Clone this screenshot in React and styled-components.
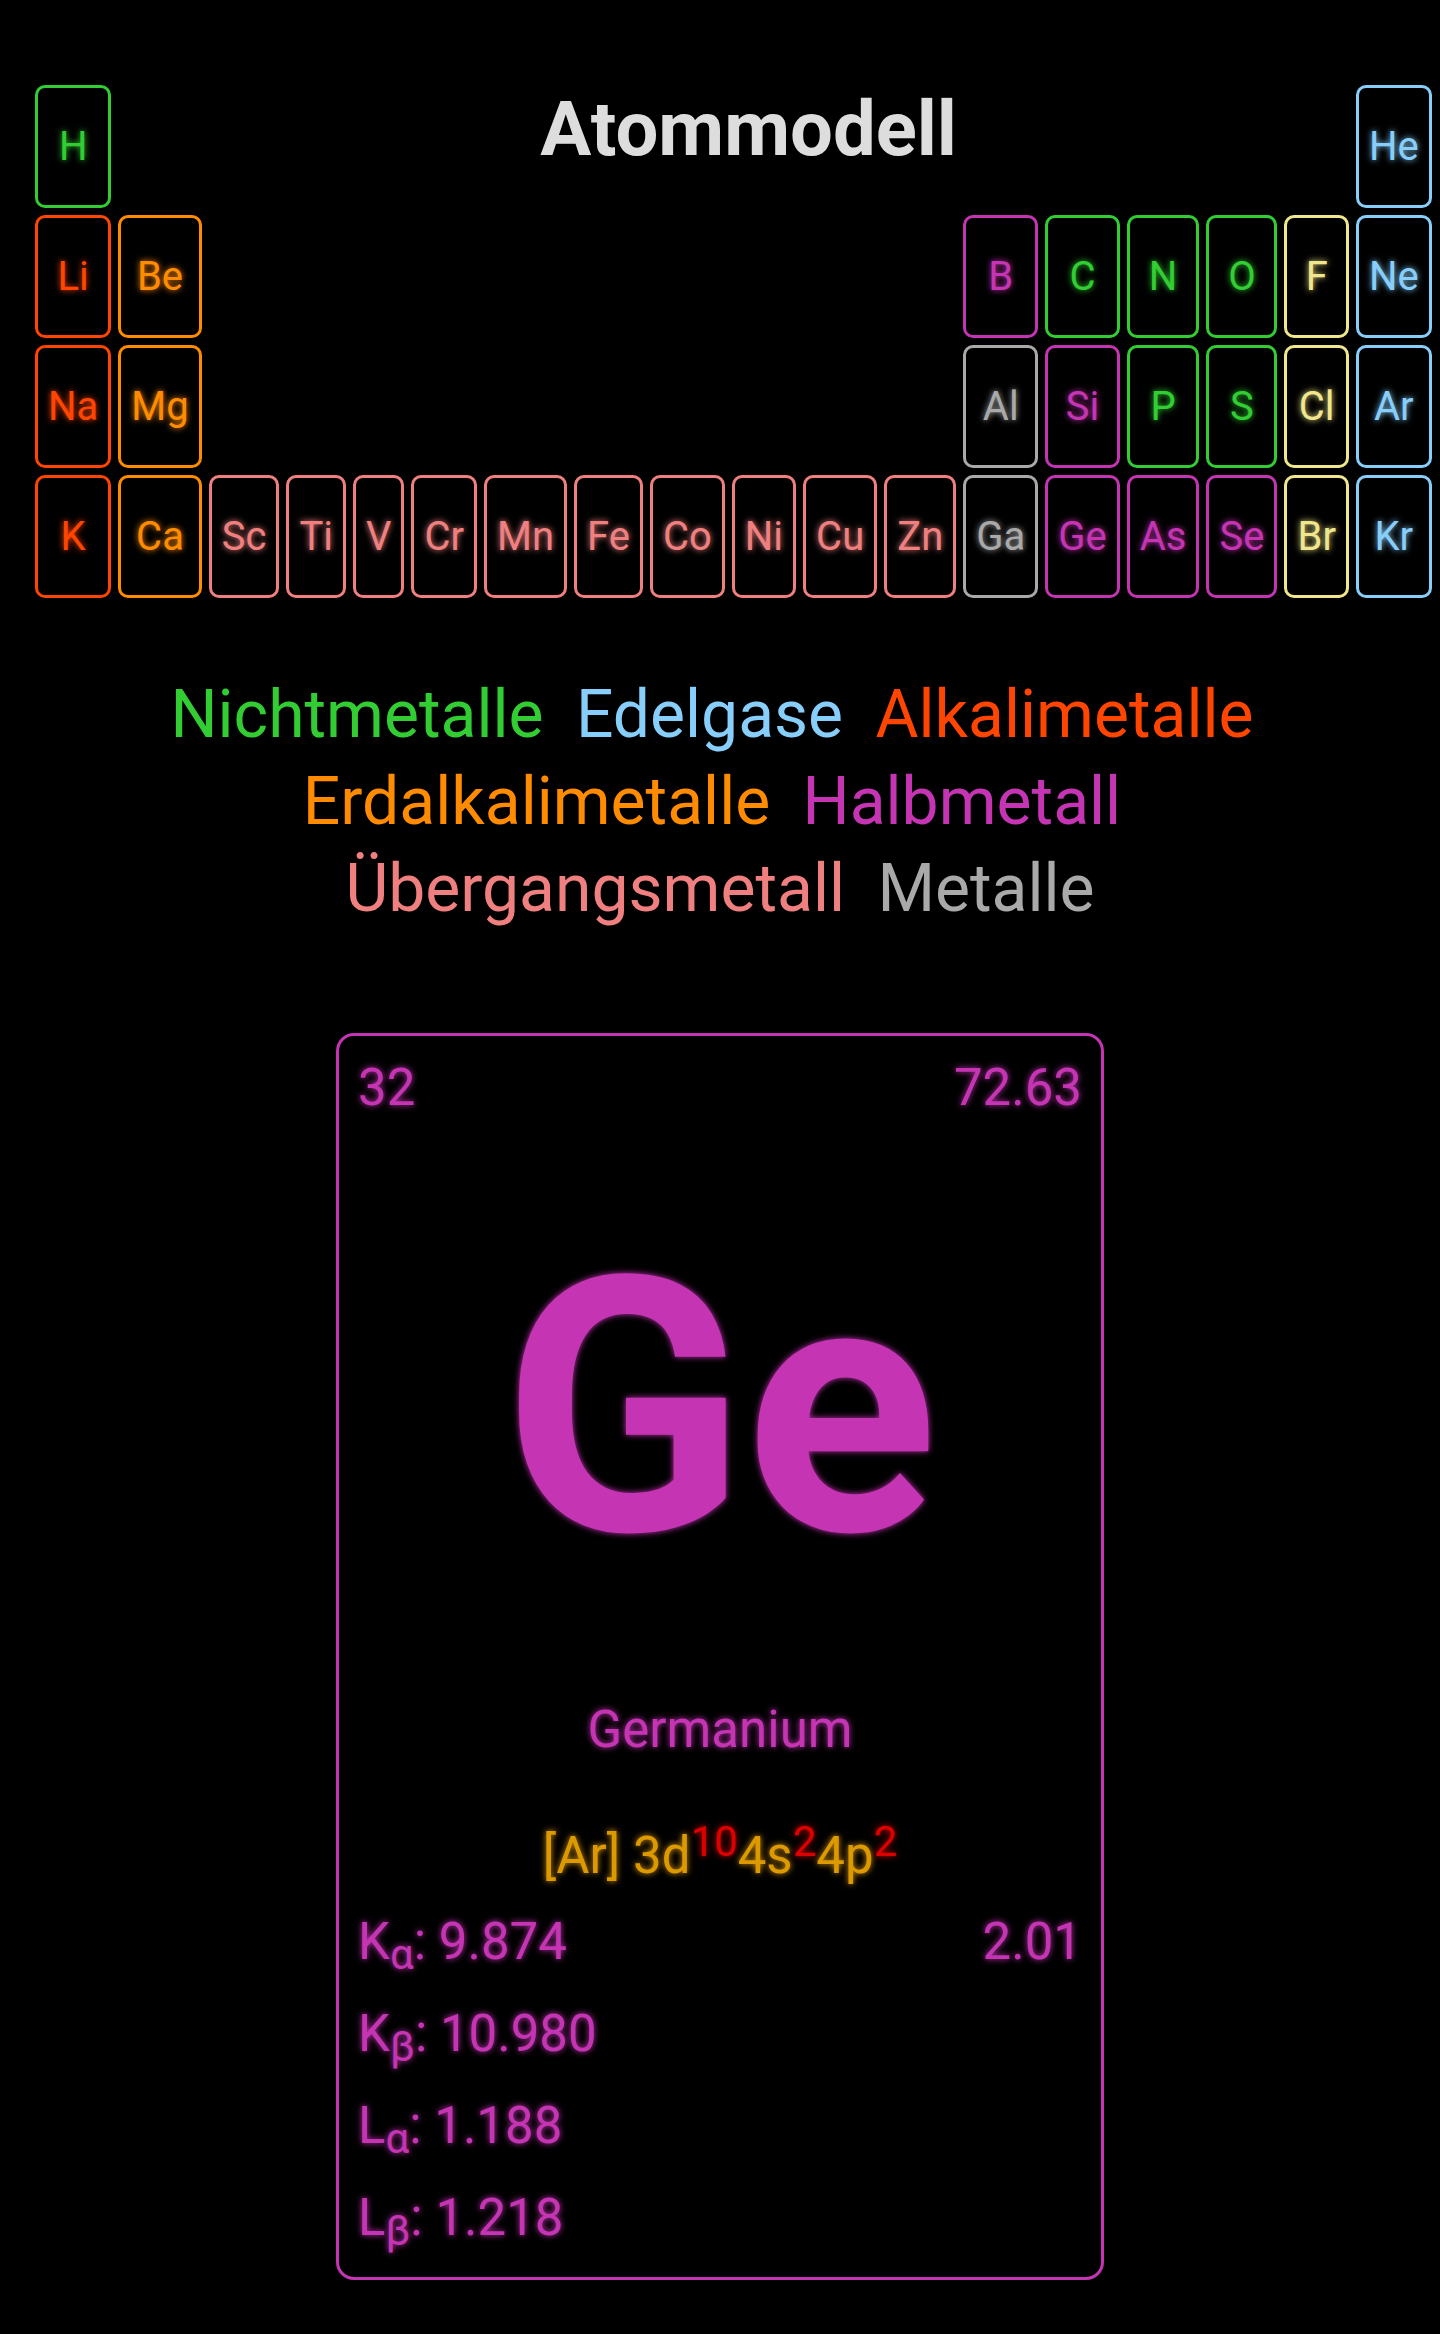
import React from "react";
import styled, { createGlobalStyle } from "styled-components";

const colors = {
  nonmetal: "#32cd32",
  noble: "#87cefa",
  alkali: "#ff4500",
  earth: "#ff8c00",
  metalloid: "#c434b3",
  transition: "#f08080",
  metal: "#a9a9a9",
  halogen: "#f0e68c",
};

const glow = "0 0 6px currentColor";

const GlobalStyle = createGlobalStyle`
  *, *::before, *::after { box-sizing: border-box; }
  body {
    margin: 0;
    background: #000;
    color: #ddd;
    font-family: Roboto, "Liberation Sans", sans-serif;
  }
`;

const Page = styled.main`
  display: flex;
  flex-direction: column;
  padding: 78px 0 54px;
`;

const Table = styled.table`
  align-self: flex-start;
  margin-left: 28px;
  border-collapse: separate;
  border-spacing: 7px;
`;

const Cell = styled.td`
  padding: 0;
`;

const TitleCell = styled(Cell)`
  padding-left: 30px;
  vertical-align: top;
  text-align: center;
`;

const Title = styled.h1`
  margin: 0;
  font-size: 76px;
  line-height: 88px;
  font-weight: 700;
`;

const ElementButton = styled.button`
  display: block;
  width: 100%;
  height: 123px;
  padding: 0 10px;
  border: 3px solid currentColor;
  border-radius: 10px;
  background: transparent;
  color: ${(p) => colors[p.$kind]};
  font-family: inherit;
  font-size: 40px;
  line-height: 48px;
  text-shadow: ${glow};
  cursor: pointer;
`;

const Legend = styled.ul`
  margin: 66px 0 0;
  padding: 0 60px;
  list-style: none;
  text-align: center;
  font-size: 66px;
  line-height: 87px;
`;

const LegendItem = styled.li`
  display: inline;
  margin-right: 16px;
  color: ${(p) => colors[p.$kind]};

  &:last-child {
    margin-right: 0;
  }
`;

const Card = styled.section`
  display: flex;
  flex-direction: column;
  width: 768px;
  max-width: 100%;
  margin: 101px auto 0;
  padding: 16px 19px 13px;
  border: 3px solid currentColor;
  border-radius: 18px;
  color: ${(p) => colors[p.$kind]};
  font-size: 51px;
  line-height: 72px;
  text-shadow: ${glow};
`;

const CardTop = styled.div`
  display: flex;
  justify-content: space-between;
`;

const Symbol = styled.div`
  margin-top: 77px;
  text-align: center;
  font-size: 356px;
  line-height: 416px;
  font-weight: 700;
`;

const Name = styled.h2`
  margin: 77px 0 0;
  text-align: center;
  font-size: inherit;
  font-weight: 400;
`;

const Configuration = styled.p`
  margin: 54px 0 0;
  text-align: center;
  color: #dd9900;
  text-shadow: ${glow};
`;

const Sup = styled.sup`
  font-size: 42px;
  line-height: 0;
  vertical-align: 17px;
  color: #dd0000;
  text-shadow: ${glow};
`;

const Sub = styled.sub`
  font-size: 42px;
  line-height: 0;
  vertical-align: -10px;
`;

const Facts = styled.div`
  display: flex;
  justify-content: space-between;
  margin-top: 4px;
  line-height: 92px;
`;

const Lines = styled.ul`
  margin: 0;
  padding: 0;
  list-style: none;
`;

const rows = [
  [["Li", "alkali"], ["Be", "earth"], null, ["B", "metalloid"], ["C", "nonmetal"], ["N", "nonmetal"], ["O", "nonmetal"], ["F", "halogen"], ["Ne", "noble"]],
  [["Na", "alkali"], ["Mg", "earth"], null, ["Al", "metal"], ["Si", "metalloid"], ["P", "nonmetal"], ["S", "nonmetal"], ["Cl", "halogen"], ["Ar", "noble"]],
  [
    ["K", "alkali"], ["Ca", "earth"],
    ...["Sc", "Ti", "V", "Cr", "Mn", "Fe", "Co", "Ni", "Cu", "Zn"].map((s) => [s, "transition"]),
    ["Ga", "metal"], ["Ge", "metalloid"], ["As", "metalloid"], ["Se", "metalloid"], ["Br", "halogen"], ["Kr", "noble"],
  ],
];

const legend = [
  ["Nichtmetalle", "nonmetal"],
  ["Edelgase", "noble"],
  ["Alkalimetalle", "alkali"],
  ["Erdalkalimetalle", "earth"],
  ["Halbmetall", "metalloid"],
  ["Übergangsmetall", "transition"],
  ["Metalle", "metal"],
];

const emissionLines = [
  ["K", "α", "9.874"],
  ["K", "β", "10.980"],
  ["L", "α", "1.188"],
  ["L", "β", "1.218"],
];

function ElementCell({ symbol, kind }) {
  return (
    <Cell>
      <ElementButton type="button" $kind={kind}>{symbol}</ElementButton>
    </Cell>
  );
}

export default function App() {
  return (
    <Page>
      <GlobalStyle />
      <Table>
        <tbody>
          <tr>
            <ElementCell symbol="H" kind="nonmetal" />
            <TitleCell colSpan={16}>
              <Title>Atommodell</Title>
            </TitleCell>
            <ElementCell symbol="He" kind="noble" />
          </tr>
          {rows.map((row, r) => (
            <tr key={r}>
              {row.map((el, i) =>
                el ? (
                  <ElementCell key={i} symbol={el[0]} kind={el[1]} />
                ) : (
                  <Cell key={i} colSpan={10} />
                )
              )}
            </tr>
          ))}
        </tbody>
      </Table>

      <Legend>
        {legend.map(([label, kind]) => (
          <React.Fragment key={kind}>
            <LegendItem $kind={kind}>{label}</LegendItem>{" "}
          </React.Fragment>
        ))}
      </Legend>

      <Card $kind="metalloid">
        <CardTop>
          <span>32</span>
          <span>72.63</span>
        </CardTop>
        <Symbol>Ge</Symbol>
        <Name>Germanium</Name>
        <Configuration>
          [Ar] 3d<Sup>10</Sup>4s<Sup>2</Sup>4p<Sup>2</Sup>
        </Configuration>
        <Facts>
          <Lines>
            {emissionLines.map(([shell, line, energy]) => (
              <li key={shell + line}>
                {shell}<Sub>{line}</Sub>: {energy}
              </li>
            ))}
          </Lines>
          <span>2.01</span>
        </Facts>
      </Card>
    </Page>
  );
}
